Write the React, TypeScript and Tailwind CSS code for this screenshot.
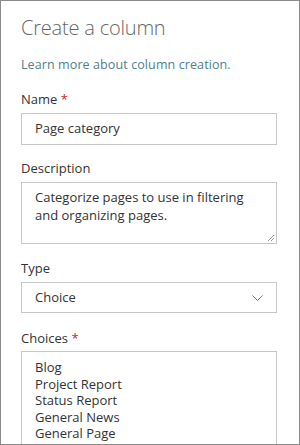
export default function App() {
  const font = { fontFamily: '"Open Sans", "Noto Sans", sans-serif' };
  return (
    <div className="w-[300px] h-[445px] overflow-hidden bg-white border border-[#8a8a8a] text-[#333]" style={font}>
      <div className="pl-[20px] pr-[22px]">
        <h1 className="mt-[13px] text-[20px] leading-[28px] font-light text-[#666] tracking-[-0.2px]">Create a column</h1>
        <p className="mt-[15px] text-[12.5px] leading-[16px] text-[#4e7f8c] tracking-[0.1px]">Learn more about column creation.</p>

        <div className="mt-[17px] text-[13px] leading-[18px]">
          Name <span className="text-[#c4262e]">*</span>
        </div>
        <div className="mt-[5px] h-[32px] border border-[#c8c8c8] flex items-center px-[13px] text-[13px]">
          Page category
        </div>

        <div className="mt-[14px] text-[13px] leading-[18px]">Description</div>
        <div className="relative mt-[5px] h-[62px] border border-[#c8c8c8] px-[13px] pt-[5px] text-[13px] leading-[18px]">
          Categorize pages to use in filtering and organizing pages.
          <svg className="absolute right-[1px] bottom-[1px]" width="8" height="8" viewBox="0 0 8 8">
            <path d="M7 1L1 7M7 4L4 7" stroke="#999" strokeWidth="1" fill="none" />
          </svg>
        </div>

        <div className="mt-[15px] text-[13px] leading-[18px]">Type</div>
        <div className="mt-[5px] h-[31px] border border-[#c8c8c8] flex items-center justify-between pl-[13px] pr-[13px] text-[13px]">
          <span>Choice</span>
          <svg width="11" height="6" viewBox="0 0 11 6">
            <path d="M0.5 0.5L5.5 5.5L10.5 0.5" stroke="#777" strokeWidth="1" fill="none" />
          </svg>
        </div>

        <div className="mt-[16px] text-[13px] leading-[18px]">
          Choices <span className="text-[#c4262e]">*</span>
        </div>
        <div className="mt-[4px] h-[120px] border border-[#c8c8c8] px-[13px] pt-[7px] text-[13px] leading-[16.5px]">
          <div>Blog</div>
          <div>Project Report</div>
          <div>Status Report</div>
          <div>General News</div>
          <div>General Page</div>
        </div>
      </div>
    </div>
  );
}
